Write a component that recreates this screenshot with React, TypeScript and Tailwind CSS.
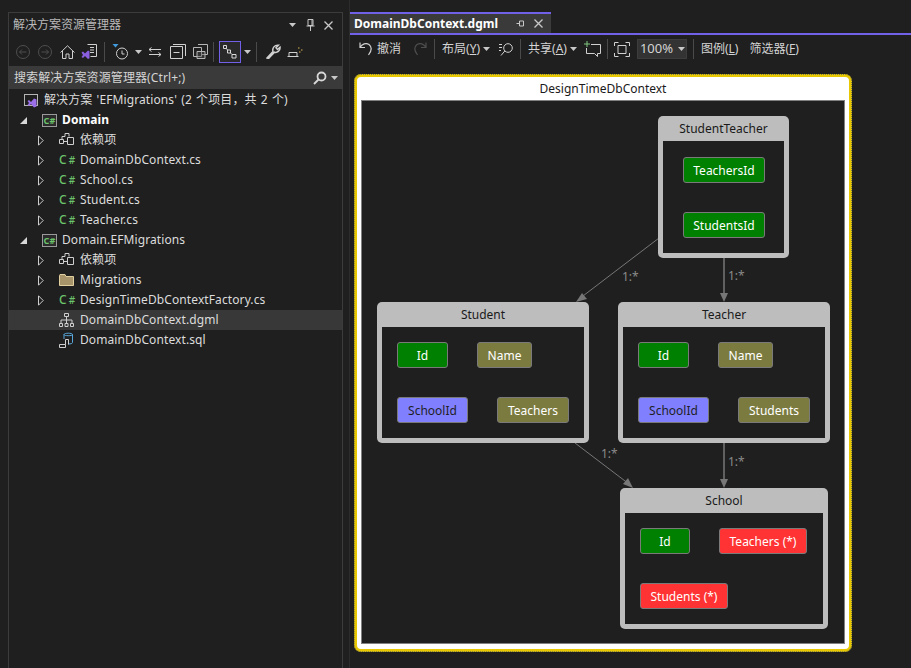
import React from 'react';

const FONT = "font-['Noto_Sans','Noto_Sans_CJK_SC',sans-serif]";

const CSharp = () => (
  <span className="flex w-[17px] items-baseline text-[12px] font-medium leading-none text-[#6cc36c]">C<span className="ml-[2px] text-[10px]">#</span></span>
);

const ProjectIcon = () => (
  <span className="flex h-[13px] w-[15px] items-center justify-center border border-[#9a9a9a] bg-[#2b2b2b] text-[9px] font-bold leading-none text-[#6cc36c]">C#</span>
);

const Chevron = () => (
  <svg width="6" height="11" viewBox="0 0 6 11" className="shrink-0"><path d="M.5.8 5.2 5.5.5 10.2z" fill="none" stroke="#d0d0d0" /></svg>
);

const Expanded = () => (
  <svg width="7" height="7" viewBox="0 0 7 7" className="shrink-0"><path d="M7 0v7H0z" fill="#d8d8d8" /></svg>
);

const DepsIcon = () => (
  <svg width="16" height="14" viewBox="0 0 16 14" fill="none" stroke="#cfcfcf"><path d="M.5 6.500h4v4h-4zM8.500 4.500h6v7h-6zM4.500 8.500h4M3 6V3.500h3v-3h4v3" /></svg>
);

const FolderIcon = () => (
  <svg width="15" height="12" viewBox="0 0 15 12"><path d="M.5 1.500V11.500h14V2.500H7L6 .5H1z" fill="#a8946a" stroke="#e0cf9f" /></svg>
);

const DgmlIcon = () => (
  <svg width="15" height="14" viewBox="0 0 15 14" fill="none" stroke="#cfcfcf"><path d="M5.500.5h4v3h-4zM.5 10.500h3v3h-3zM6 10.500h3v3H6zM11.500 10.500h3v3h-3zM7.500 3.500v7M2 10.500V7h11v3.500" /></svg>
);

const SqlIcon = () => (
  <svg width="15" height="16" viewBox="0 0 15 16" fill="none"><path d="M5 2.500C5 .8 13.500.8 13.500 2.500v8c0 1-2 1.500-4 1.500" stroke="#59a8dc" /><path d="M5 2.500c0 1.600 8.500 1.600 8.500 0M5 2.500V7" stroke="#59a8dc" /><path d="M.5 12.500h6v-5h3v5M.5 15.500V12.500M.5 15.500h6v-3" stroke="#cfcfcf" /></svg>
);

const VsMark = () => (
  <svg width="10" height="10" viewBox="0 0 10 10"><path d="M.5 3 2 2l2 2 3-3.500L9.500 1.500v7L7 9.500 4 6 2 8 .5 7 2 5z" fill="#9a6fe8" /></svg>
);

const treeRows: { label: string; depth: 1 | 2; icon: React.ReactNode; bold?: boolean; selected?: boolean; leaf?: boolean }[] = [
  { label: 'Domain', depth: 1, icon: <ProjectIcon />, bold: true },
  { label: '依赖项', depth: 2, icon: <DepsIcon /> },
  { label: 'DomainDbContext.cs', depth: 2, icon: <CSharp /> },
  { label: 'School.cs', depth: 2, icon: <CSharp /> },
  { label: 'Student.cs', depth: 2, icon: <CSharp /> },
  { label: 'Teacher.cs', depth: 2, icon: <CSharp /> },
  { label: 'Domain.EFMigrations', depth: 1, icon: <ProjectIcon /> },
  { label: '依赖项', depth: 2, icon: <DepsIcon /> },
  { label: 'Migrations', depth: 2, icon: <FolderIcon /> },
  { label: 'DesignTimeDbContextFactory.cs', depth: 2, icon: <CSharp /> },
  { label: 'DomainDbContext.dgml', depth: 2, icon: <DgmlIcon />, selected: true, leaf: true },
  { label: 'DomainDbContext.sql', depth: 2, icon: <SqlIcon />, leaf: true },
];

const Caret = () => (
  <svg width="7" height="4" viewBox="0 0 7 4" className="shrink-0"><path d="M0 0h7L3.500 4z" fill="#c8c8c8" /></svg>
);

const Sep = ({ cls }: { cls: string }) => <div className={`h-[20px] w-px bg-[#4a4a4a] ${cls}`} />;

const SolutionToolbar = () => (
  <div className="flex h-[29px] items-center pl-[3px]">
    <div className="flex w-[22px] justify-center">
      <svg width="14" height="14" viewBox="0 0 14 14" fill="none" stroke="#4e4e4e"><circle cx="7" cy="7" r="6.500" /><path d="M10.500 7h-7M6 4.500 3.500 7 6 9.500" /></svg>
    </div>
    <div className="flex w-[22px] justify-center">
      <svg width="14" height="14" viewBox="0 0 14 14" fill="none" stroke="#4e4e4e"><circle cx="7" cy="7" r="6.500" /><path d="M3.500 7h7M8 4.500 10.500 7 8 9.500" /></svg>
    </div>
    <div className="flex w-[22px] justify-center">
      <svg width="15" height="14" viewBox="0 0 15 14" fill="none" stroke="#d0d0d0"><path d="M.5 7.500 7.500.8l7 6.700M2.500 6v7.500h3.500V9h3v4.500h3.500V6" /></svg>
    </div>
    <div className="flex w-[22px] justify-center">
      <svg width="16" height="16" viewBox="0 0 16 16" fill="none"><path d="M6.500.5h9v12h-6" stroke="#d0d0d0" /><path d="M9 3.500h4M9 6h4M9 8.500h4" stroke="#d0d0d0" /><path d="M.5 8.500 2 7.500l2 2 3-3 1.500.8v7l-1.500.7-3-3-2 2-1.500-1L2 11z" fill="#8a5fe0" /></svg>
    </div>
    <Sep cls="ml-[4px]" />
    <div className="ml-[6px] flex w-[20px] justify-center">
      <svg width="18" height="18" viewBox="0 0 18 18" fill="none"><path d="M.5 1h6L3.500 4.500z" fill="#3f9bdc" /><circle cx="10" cy="10.500" r="5.500" stroke="#d0d0d0" /><path d="M10 7.500v3.500h2.500" stroke="#d0d0d0" /></svg>
    </div>
    <div className="ml-[4px] flex w-[8px]"><Caret /></div>
    <div className="ml-[2px] flex w-[20px] justify-center">
      <svg width="14" height="10" viewBox="0 0 14 10" fill="none" stroke="#d0d0d0"><path d="M13 2.500H1M3.500.5 1 2.500l2.500 2M1 7.500h12M10.500 5.500 13 7.500l-2.500 2" /></svg>
    </div>
    <div className="ml-[2px] flex w-[22px] justify-center">
      <svg width="16" height="15" viewBox="0 0 16 15" fill="none" stroke="#d0d0d0"><path d="M.5 2.500h12v12H.5zM3 .5h12.500V12M3.500 8.500h6" /></svg>
    </div>
    <div className="flex w-[22px] justify-center">
      <svg width="15" height="15" viewBox="0 0 15 15" fill="none" stroke="#b5b5b5"><path d="M.5 3.500h8v9h-8zM5 .5h9.500v10H8.500" /><path d="M4 7.500h8v7H4z" fill="#555" fillOpacity=".4" /></svg>
    </div>
    <Sep cls="ml-[2px]" />
    <div className="ml-[5px] flex h-[22px] w-[22px] items-center justify-center border border-[#7160e8] bg-[#2a2a2a]">
      <svg width="14" height="14" viewBox="0 0 14 14" fill="none" stroke="#d8d8d8"><path d="M.5.5h3v3h-3zM4.500 5h3v3h-3zM9 9.500h4v3.500H9zM3.500 3.500l1 1.500M7.500 8 9 9.500" /></svg>
    </div>
    <div className="ml-[3px] flex w-[8px]"><Caret /></div>
    <Sep cls="ml-[4px]" />
    <div className="ml-[5px] flex w-[22px] justify-center">
      <svg width="15" height="15" viewBox="0 0 15 15" fill="none" stroke="#d0d0d0" strokeWidth="1.500"><path d="M1 14l6-6.500C6 4 8.500.8 12.500 1.200L10 3.800 11.500 5.500l2.500-2.300C14.500 7 11 9 8.500 8.200L2.500 14.500z" /></svg>
    </div>
    <div className="flex w-[22px] justify-center">
      <svg width="16" height="10" viewBox="0 0 16 10" fill="none"><path d="M.5 9.500h11M2 9.500v-4h8v4M2 5.500h8" stroke="#d0d0d0" /><path d="M11 1h1.500M14 3h1.500M12 5h1.500" stroke="#d8b354" /></svg>
    </div>
  </div>
);

const SolutionExplorer = () => (
  <aside className="mt-[12px] ml-[8px] flex w-[335px] shrink-0 flex-col border-t border-r border-l border-[#3c3c3c]">
    <div className="flex h-[24px] items-center pl-[4px] pr-[9px] text-[12px] text-[#b9b9b9]">
      <span className="flex-1">解决方案资源管理器</span>
      <Caret />
      <svg width="9" height="12" viewBox="0 0 9 12" fill="none" stroke="#c8c8c8" className="ml-[10px]"><path d="M2 .5h5v6H2zM.5 7h8M4.500 7v5M6 1v5" /></svg>
      <svg width="9" height="9" viewBox="0 0 9 9" stroke="#c8c8c8" strokeWidth="1.300" className="ml-[9px]"><path d="M.5.5l8 8M8.500.5l-8 8" /></svg>
    </div>
    <SolutionToolbar />
    <div className="flex h-[23px] items-center bg-[#3a3a3a] pl-[5px] pr-[4px] text-[12px] text-[#d4d4d4]">
      <span className="flex-1 tracking-[0.1px]">搜索解决方案资源管理器(Ctrl+;)</span>
      <svg width="14" height="14" viewBox="0 0 14 14" fill="none" stroke="#d8d8d8" strokeWidth="1.800"><circle cx="8.500" cy="5.500" r="4" /><path d="M5.500 8.500 1 13" /></svg>
      <div className="ml-[4px]"><Caret /></div>
    </div>
    <div className="flex flex-col pt-[1px] text-[12px] tracking-[0.1px] text-[#dcdcdc]">
      <div className="flex h-[20px] items-center pl-[15px]">
        <span className="relative h-[12px] w-[14px] border border-[#b5b5b5]">
          <span className="absolute top-[3px] left-[2px]"><VsMark /></span>
        </span>
        <span className="ml-[6px] [word-spacing:1px]">解决方案 'EFMigrations' (2 个项目，共 2 个)</span>
      </div>
      {treeRows.map((row, i) => (
        <div key={i} className={`flex h-[20px] items-center ${row.selected ? 'bg-[#383838]' : ''}`}>
          {row.depth === 1 ? (
            <div className="w-[33px] pl-[11px]"><Expanded /></div>
          ) : (
            <div className="w-[50px] pl-[29px]">{!row.leaf && <Chevron />}</div>
          )}
          <div className={`flex shrink-0 items-center ${row.depth === 1 ? 'w-[20px]' : 'w-[21px]'}`}>{row.icon}</div>
          <span className={row.bold ? 'font-bold text-white' : ''}>{row.label}</span>
        </div>
      ))}
    </div>
  </aside>
);

const TextBtn = ({ children, cls = '' }: { children: React.ReactNode; cls?: string }) => (
  <span className={`text-[12px] text-[#d4d4d4] ${cls}`}>{children}</span>
);

const DiagramToolbar = () => (
  <div className="flex h-[28px] items-center pl-[9px]">
    <svg width="14" height="14" viewBox="0 0 14 14" fill="none" stroke="#d0d0d0" strokeWidth="1.200"><path d="M1 .5v5h5M1 5.500C3 2 7 .5 10 2.500c3 2.500 3 6-.5 10.500" /></svg>
    <TextBtn cls="ml-[4px]">撤消</TextBtn>
    <svg width="14" height="14" viewBox="0 0 14 14" fill="none" stroke="#4e4e4e" strokeWidth="1.200" className="ml-[12px]"><path d="M13 .5v5H8M13 5.500C11 2 7 .5 4 2.500c-3 2.500-3 6 .5 10.500" /></svg>
    <Sep cls="ml-[7px]" />
    <TextBtn cls="ml-[7px]">布局(<u>Y</u>)</TextBtn>
    <div className="ml-[3px]"><Caret /></div>
    <svg width="14" height="13" viewBox="0 0 14 13" fill="none" stroke="#d0d0d0" className="ml-[9px]"><circle cx="9" cy="5" r="4.300" /><path d="M5.800 8 2 12.500M0 1.500h3M0 4.500h3M0 7.500h2" /></svg>
    <Sep cls="ml-[7px]" />
    <TextBtn cls="ml-[7px]">共享(<u>A</u>)</TextBtn>
    <div className="ml-[3px]"><Caret /></div>
    <svg width="17" height="16" viewBox="0 0 17 16" fill="none" className="ml-[7px]"><path d="M3 0v6M0 3h6" stroke="#7ec87e" /><path d="M7 3.500h9.500v9h-3v3l-3-3H2.500V7" stroke="#d0d0d0" /></svg>
    <Sep cls="ml-[6px]" />
    <svg width="16" height="15" viewBox="0 0 16 15" fill="none" stroke="#d0d0d0" className="ml-[6px]"><path d="M.5 4V.5h4M11.500.5h4V4M15.500 11v3.500h-4M4.500 14.500h-4V11" /><path d="M4 3.500h8v8H4z" /></svg>
    <div className="ml-[7px] flex h-[20px] w-[50px] items-center gap-[5px] border border-[#3c3c3c] bg-[#333333] pl-[2px]">
      <span className="text-[13px] text-[#d4d4d4]">100%</span>
      <Caret />
    </div>
    <Sep cls="ml-[6px]" />
    <TextBtn cls="ml-[7px]">图例(<u>L</u>)</TextBtn>
    <TextBtn cls="ml-[11px]">筛选器(<u>F</u>)</TextBtn>
  </div>
);

type Field = { label: string; w: string; color: string };

const Id: Field = { label: 'Id', w: 'w-[51px]', color: 'bg-[#008000] text-white' };
const Nav = (label: string, w: string): Field => ({ label, w, color: 'bg-[#7b7b40] text-white' });
const Fk: Field = { label: 'SchoolId', w: 'w-[71px]', color: 'bg-[#8080ff] text-[#1f1f1f]' };
const Coll = (label: string): Field => ({ label, w: 'w-[88px]', color: 'bg-[#ff3333] text-white' });
const Key = (label: string): Field => ({ label, w: 'w-[82px]', color: 'bg-[#008000] text-white' });

const nodes: { title: string; box: string; pad: string; rows: Field[][] }[] = [
  { title: 'StudentTeacher', box: 'left-[296px] top-[15px] w-[131px] h-[142px]', pad: 'pl-[20px] pt-[16px]', rows: [[Key('TeachersId')], [Key('StudentsId')]] },
  { title: 'Student', box: 'left-[15px] top-[201px] w-[212px] h-[141px]', pad: 'pl-[15px] pt-[15px]', rows: [[Id, Nav('Name', 'w-[55px]')], [Fk, Nav('Teachers', 'w-[72px]')]] },
  { title: 'Teacher', box: 'left-[256px] top-[201px] w-[212px] h-[141px]', pad: 'pl-[15px] pt-[15px]', rows: [[Id, Nav('Name', 'w-[55px]')], [Fk, Nav('Students', 'w-[72px]')]] },
  { title: 'School', box: 'left-[258px] top-[387px] w-[208px] h-[141px]', pad: 'pl-[15px] pt-[15px]', rows: [[{ ...Id, w: 'w-[50px]' }, Coll('Teachers (*)')], [Coll('Students (*)')]] },
];

const edges = [
  { d: 'M297 137 217 198', label: '1:*', cls: 'left-[260px] top-[168px]' },
  { d: 'M362 157V197', label: '1:*', cls: 'left-[366px] top-[167px]' },
  { d: 'M213 342 267 383', label: '1:*', cls: 'left-[239px] top-[345px]' },
  { d: 'M362 342V383', label: '1:*', cls: 'left-[366px] top-[353px]' },
];

const Diagram = () => (
  <div className="relative flex-1">
    {/* group box, everything in it sits on a free canvas */}
    <div className="absolute top-[11px] left-[4px] flex h-[578px] w-[498px] flex-col rounded-[7px] border-[3px] border-[#e8c800] bg-white px-[5px] pb-[6px] outline-1 -outline-offset-1 outline-[#77764a] outline-dotted">
      <div className="flex h-[24px] shrink-0 items-center justify-center text-[12px] text-[#1a1a1a]">DesignTimeDbContext</div>
      <div className="relative flex-1 bg-[#1f1f1f] outline-1 outline-[#808080]">
        <svg className="absolute top-0 left-0" width="482" height="542" fill="none">
          {edges.map((e, i) => <path key={i} d={e.d} stroke="#777" strokeWidth={i % 2 ? 1.500 : 1} />)}
          <path d="M214 201 220 192 225 198z" fill="#777" />
          <path d="M362 201 358 192H366z" fill="#777" />
          <path d="M271 387 261 383 266 377z" fill="#777" />
          <path d="M362 387 358 378H366z" fill="#777" />
        </svg>
        {edges.map((e, i) => (
          <span key={i} className={`absolute text-[12px] leading-[16px] text-[#8a8a8a] ${e.cls}`}>{e.label}</span>
        ))}
        {nodes.map(n => (
          <div key={n.title} className={`absolute flex flex-col rounded-[5px] bg-[#bdbdbd] p-[5px] pt-0 ${n.box}`}>
            <div className="flex h-[25px] shrink-0 items-center justify-center text-[12px] text-[#1a1a1a]">{n.title}</div>
            <div className={`flex flex-1 flex-col gap-[29px] bg-[#1f1f1f] ${n.pad}`}>
              {n.rows.map((row, i) => (
                <div key={i} className="flex gap-[29px]">
                  {row.map(f => (
                    <div key={f.label} className={`flex h-[26px] items-center justify-center rounded-[3px] border border-[#7a7a7a] pt-[1px] text-[12px] ${f.w} ${f.color}`}>{f.label}</div>
                  ))}
                </div>
              ))}
            </div>
          </div>
        ))}
      </div>
    </div>
  </div>
);

export default function App() {
  return (
    <div className={`flex h-[668px] w-[911px] overflow-hidden bg-[#1f1f1f] ${FONT}`}>
      <SolutionExplorer />
      <main className="ml-[6px] flex min-w-0 flex-1 flex-col border-l border-[#2c2c2c] pt-[12px]">
        <div className="flex h-[23px] shrink-0 border-b-2 border-[#7160e8]">
          <div className="flex w-[201px] items-center border-t-2 border-[#7160e8] bg-[#3a3a3a] pl-[4px] text-[12px] font-bold text-white">
            <span className="flex-1">DomainDbContext.dgml</span>
            <svg width="9" height="9" viewBox="0 0 9 9" fill="none" stroke="#c8c8c8"><path d="M.5 4.500h3M3.500 2v5h4V2z" /></svg>
            <svg width="9" height="9" viewBox="0 0 9 9" stroke="#c8c8c8" strokeWidth="1.300" className="mr-[8px] ml-[9px]"><path d="M.5.5l8 8M8.500.5l-8 8" /></svg>
          </div>
        </div>
        <DiagramToolbar />
        <Diagram />
      </main>
    </div>
  );
}
